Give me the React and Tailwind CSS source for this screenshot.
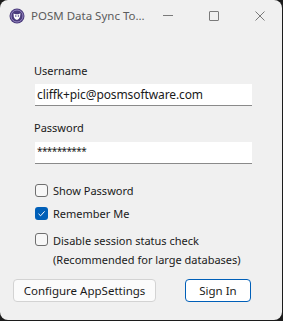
import { useState } from "react";

function AppLogo() {
  return (
    <svg width="16" height="16" viewBox="0 0 16 16">
      <circle cx="8" cy="8" r="7.5" fill="#4a3b7c" />
      <circle cx="8" cy="8" r="6" fill="none" stroke="#a99bd0" strokeWidth="0.8" />
      <path d="M4.5 5.5 L6.5 6.2 L9.5 6.2 L11.5 5.2 L11 9 Q9.5 12 8 12 Q5.5 11.5 4.8 9 Z" fill="#fff" />
      <circle cx="6.8" cy="8" r="0.8" fill="#4a3b7c" />
      <circle cx="9.4" cy="8" r="0.8" fill="#4a3b7c" />
    </svg>
  );
}

function CheckBox({ checked, onChange, children }) {
  return (
    <label className="flex items-start gap-[5px] cursor-default" onClick={onChange}>
      <span
        className={`mt-[2px] w-[13px] h-[13px] shrink-0 rounded-[3px] flex items-center justify-center ${
          checked ? "bg-[#005fb8]" : "bg-[#f7f7f7] border border-[#6f6f6f]"
        }`}
      >
        {checked && (
          <svg width="9" height="9" viewBox="0 0 9 9">
            <path d="M1.5 4.8 L3.6 6.8 L7.6 2.4" fill="none" stroke="#fff" strokeWidth="1" />
          </svg>
        )}
      </span>
      <span className="leading-[17px]">{children}</span>
    </label>
  );
}

export default function App() {
  const [showPw, setShowPw] = useState(false);
  const [remember, setRemember] = useState(true);
  const [noCheck, setNoCheck] = useState(false);

  return (
    <div className="w-[283px] h-[321px] bg-[#1c1c1c]">
      <div
        className="w-[282px] h-[320px] rounded-[8px] bg-[#f0f0f0] flex flex-col text-[11px] text-[#1a1a1a]"
        style={{ fontFamily: '"Noto Sans", "Open Sans", sans-serif' }}
      >
        {/* title bar */}
        <div className="h-[31px] flex items-center shrink-0">
          <div className="ml-[9px]">
            <AppLogo />
          </div>
          <span className="ml-[6px] text-[#5c5c5c] text-[11.5px] whitespace-nowrap">POSM Data Sync To...</span>
          <div className="ml-auto flex h-full">
            <div className="w-[46px] flex items-center justify-center">
              <div className="w-[10px] h-px bg-[#7a7a7a]" />
            </div>
            <div className="w-[46px] flex items-center justify-center">
              <div className="w-[10px] h-[10px] border border-[#7a7a7a] rounded-[1px]" />
            </div>
            <div className="w-[46px] flex items-center justify-center">
              <svg width="10" height="10" viewBox="0 0 10 10">
                <path d="M0.5 0.5 L9.5 9.5 M9.5 0.5 L0.5 9.5" stroke="#7a7a7a" strokeWidth="1" />
              </svg>
            </div>
          </div>
        </div>

        {/* form */}
        <div className="pl-[34px] pt-[32px] flex flex-col">
          <span className="leading-[16px]">Username</span>
          <div className="mt-[5px] ml-px w-[217px] h-[22px] bg-white border-b border-[#8a8a8a] flex items-center pl-[2px] text-[12px] tracking-[-0.1px]">
            cliffk+pic@posmsoftware.com
          </div>

          <span className="mt-[14px] leading-[16px]">Password</span>
          <div className="mt-[6px] ml-px w-[217px] h-[22px] bg-white border-b border-[#8a8a8a] flex items-start pt-[2px] pl-[2px] text-[10px] leading-[14px] tracking-[-0.6px]">
            **********
          </div>

          <div className="mt-[18px] ml-px flex flex-col">
            <CheckBox checked={showPw} onChange={() => setShowPw(!showPw)}>
              Show Password
            </CheckBox>
            <div className="mt-[6px]">
              <CheckBox checked={remember} onChange={() => setRemember(!remember)}>
                Remember Me
              </CheckBox>
            </div>
            <div className="mt-[9px]">
              <CheckBox checked={noCheck} onChange={() => setNoCheck(!noCheck)}>
                <span className="block leading-[19px]">Disable session status check</span>
                <span className="block leading-[19px]">(Recommended for large databases)</span>
              </CheckBox>
            </div>
          </div>
        </div>

        {/* buttons */}
        <div className="mt-auto mb-[18px] flex items-center pl-[13px]">
          <button className="w-[143px] h-[23px] rounded-[4px] bg-[#fbfbfb] border border-[#d3d3d3] text-[#1a1a1a] text-[11.5px]">
            Configure AppSettings
          </button>
          <button className="ml-[29px] w-[66px] h-[23px] rounded-[4px] bg-white border border-[#005fb8] text-[#1a1a1a] text-[11.5px]">
            Sign In
          </button>
        </div>
      </div>
    </div>
  );
}
